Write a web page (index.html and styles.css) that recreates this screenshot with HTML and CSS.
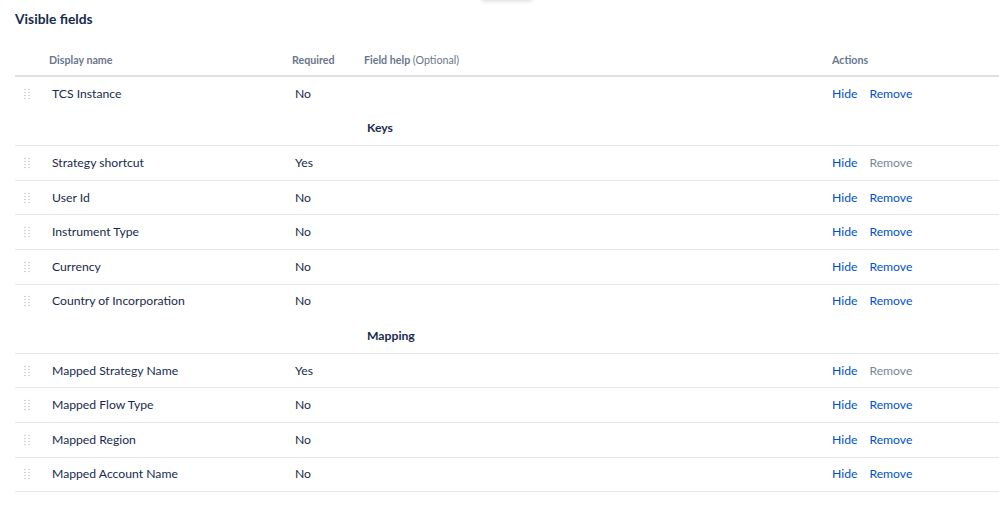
FILE: index.html
```html
<!doctype html>
<html>
<head>
  <meta charset="utf-8">
  <title>Visible fields</title>
  <link rel="stylesheet" href="styles.css">
</head>
<body>
  <div class="popup-edge"></div>
  <h2 class="section-title">Visible fields</h2>

  <table class="fields-table">
    <colgroup>
      <col class="col-handle">
      <col class="col-name">
      <col class="col-required">
      <col class="col-help">
      <col class="col-actions">
    </colgroup>
    <thead>
      <tr>
        <th></th>
        <th>Display name</th>
        <th>Required</th>
        <th>Field help <span class="optional">(Optional)</span></th>
        <th>Actions</th>
      </tr>
    </thead>
    <tbody id="fields-body"></tbody>
  </table>

  <script src="script.js"></script>
</body>
</html>
```

FILE: styles.css
```css
body {
  margin: 0;
  padding: 0 0 0 15px;
  background-color: #ffffff;
  color: #172b4d;
  font-family: Lato, "Noto Sans", sans-serif;
  font-size: 12.2px;
}
.popup-edge {
  position: absolute;
  top: -20px;
  left: 482px;
  width: 50px;
  height: 20px;
  background-color: #ffffff;
  box-shadow: 0 1px 4px rgba(9, 30, 66, 0.18);
}
.section-title {
  font-size: 13.8px;
  font-weight: 700;
  margin: 9px 0 0 0;
  line-height: 20px;
}
.fields-table {
  width: 984px;
  border-collapse: collapse;
  table-layout: fixed;
  margin-top: 24px;
}
.col-handle { width: 34px; }
.col-name { width: 243px; }
.col-required { width: 72px; }
.col-help { width: 468px; }
.col-actions { width: 167px; }

.fields-table th {
  text-align: left;
  font-size: 10.7px;
  font-weight: 700;
  color: #6b778c;
  padding: 0 0 8px 0;
  border-bottom: 2px solid #dfe1e6;
  line-height: 14px;
}
.fields-table th .optional {
  font-weight: 400;
}
.fields-table td {
  height: 33.6px;
  padding: 0 0 0 3px;
  vertical-align: middle;
  line-height: 16px;
}
.field-row + .field-row td {
  border-top: 1px solid #e4e6ea;
}
.field-row.final td {
  border-bottom: 1px solid #e4e6ea;
}
.group-row td {
  font-weight: 700;
  border-bottom: 1px solid #e4e6ea;
  padding-top: 1px;
}
.handle {
  display: block;
  margin-left: 6px;
}
.actions a {
  color: #0052cc;
  text-decoration: none;
  margin-right: 12px;
}
.actions a.disabled {
  color: #7a869a;
}
.actions {
  padding-left: 0 !important;
}
```

FILE: script.js
```js
// Fields shown in the table, split by group
const groups = [
  { title: null, fields: [['TCS Instance', 'No']] },
  { title: 'Keys', fields: [
    ['Strategy shortcut', 'Yes'],
    ['User Id', 'No'],
    ['Instrument Type', 'No'],
    ['Currency', 'No'],
    ['Country of Incorporation', 'No']
  ] },
  { title: 'Mapping', fields: [
    ['Mapped Strategy Name', 'Yes'],
    ['Mapped Flow Type', 'No'],
    ['Mapped Region', 'No'],
    ['Mapped Account Name', 'No']
  ] }
];

const handleSvg = '<svg class="handle" width="6" height="12" viewBox="0 0 6 12">' +
  [1.5, 4.5, 7.5, 10.5].map(y =>
    `<circle cx="1" cy="${y}" r="0.8" fill="#c1c7d0"/><circle cx="5" cy="${y}" r="0.8" fill="#c1c7d0"/>`
  ).join('') + '</svg>';

const body = document.getElementById('fields-body');
let html = '';

groups.forEach((group, gi) => {
  if (group.title) {
    html += `<tr class="group-row"><td></td><td></td><td></td><td>${group.title}</td><td></td></tr>`;
  }
  group.fields.forEach(([name, required], i) => {
    const isFinal = gi === groups.length - 1 && i === group.fields.length - 1;
    // required fields can't be removed
    const removeClass = required === 'Yes' ? 'disabled' : '';
    html += `<tr class="field-row${isFinal ? ' final' : ''}">
      <td>${handleSvg}</td>
      <td>${name}</td>
      <td>${required}</td>
      <td></td>
      <td class="actions"><a href="#">Hide</a><a href="#" class="${removeClass}">Remove</a></td>
    </tr>`;
  });
});

body.innerHTML = html;
```
